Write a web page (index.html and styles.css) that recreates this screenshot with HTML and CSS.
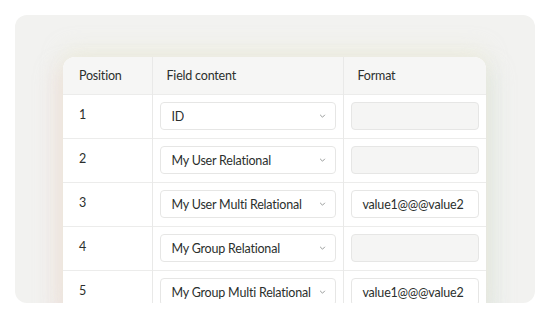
FILE: index.html
```html
<!DOCTYPE html>
<html>
<head>
<meta charset="utf-8">
<link rel="stylesheet" href="styles.css">
</head>
<body>

<div class="card">
  <div class="glow">
    <table class="map">
      <thead>
        <tr>
          <th class="col-pos">Position</th>
          <th class="col-field">Field content</th>
          <th class="col-format">Format</th>
        </tr>
      </thead>
      <tbody>
        <tr>
          <td>1</td>
          <td><div class="select"><span>ID</span><svg class="chev" viewBox="0 0 8 5"><path d="M1 1l3 3 3-3"/></svg></div></td>
          <td><div class="input off"></div></td>
        </tr>
        <tr>
          <td>2</td>
          <td><div class="select"><span>My User Relational</span><svg class="chev" viewBox="0 0 8 5"><path d="M1 1l3 3 3-3"/></svg></div></td>
          <td><div class="input off"></div></td>
        </tr>
        <tr>
          <td>3</td>
          <td><div class="select"><span>My User Multi Relational</span><svg class="chev" viewBox="0 0 8 5"><path d="M1 1l3 3 3-3"/></svg></div></td>
          <td><div class="input">value1@@@value2</div></td>
        </tr>
        <tr>
          <td>4</td>
          <td><div class="select"><span>My Group Relational</span><svg class="chev" viewBox="0 0 8 5"><path d="M1 1l3 3 3-3"/></svg></div></td>
          <td><div class="input off"></div></td>
        </tr>
        <tr>
          <td>5</td>
          <td><div class="select"><span>My Group Multi Relational</span><svg class="chev" viewBox="0 0 8 5"><path d="M1 1l3 3 3-3"/></svg></div></td>
          <td><div class="input">value1@@@value2</div></td>
        </tr>
      </tbody>
    </table>
  </div>
</div>

</body>
</html>
```

FILE: styles.css
```css
* {
  box-sizing: border-box;
}

body {
  margin: 0;
  padding: 15px;
  background: #fff;
  font-family: Lato, "Liberation Sans", sans-serif;
  color: #2b2f2d;
}

.card {
  width: 520px;
  height: 288px;
  border-radius: 12px;
  background: #f2f2f0;
  overflow: hidden;
  padding: 42px 49px 0 48px;
}

.glow {
  border-radius: 12px 12px 0 0;
  background: #fff;
  box-shadow: 0 -8px 20px rgba(236, 236, 212, 0.5),
              -8px 10px 20px rgba(242, 214, 212, 0.5),
              8px 10px 20px rgba(212, 228, 222, 0.5);
  overflow: hidden;
}

.map {
  width: 423px;
  table-layout: fixed;
  border-collapse: collapse;
  font-size: 12.5px;
  letter-spacing: -0.2px;
  white-space: nowrap;
}

.map th {
  background: #f6f6f5;
  font-weight: 400;
  text-align: left;
  height: 37px;
  padding: 0 14px;
  border-left: 1px solid #e9e9e8;
}

.map th:first-child {
  padding: 0 16px;
}

.map th:first-child, .map td:first-child {
  border-left: none;
}

.col-pos { width: 89px; }
.col-field { width: 191px; }
.col-format { width: 143px; }

.map td {
  height: 44px;
  padding: 0 7px;
  border-left: 1px solid #e9e9e8;
  border-top: 1px solid #ececeb;
}

.map td:first-child {
  padding: 0 16px 4px;
}

.select, .input {
  height: 28px;
  border: 1px solid #e6e6e5;
  border-radius: 4px;
  background: #fff;
  display: flex;
  align-items: center;
}

.select {
  justify-content: space-between;
  gap: 6px;
  padding: 0 9px 0 11px;
}

.select span {
  overflow: hidden;
}

.input {
  padding: 0 11px;
}

.input.off {
  background: #f5f5f4;
}

.chev {
  flex-shrink: 0;
  width: 7px;
  height: 4px;
  fill: none;
  stroke: #7f8381;
  stroke-width: 1;
}
```
